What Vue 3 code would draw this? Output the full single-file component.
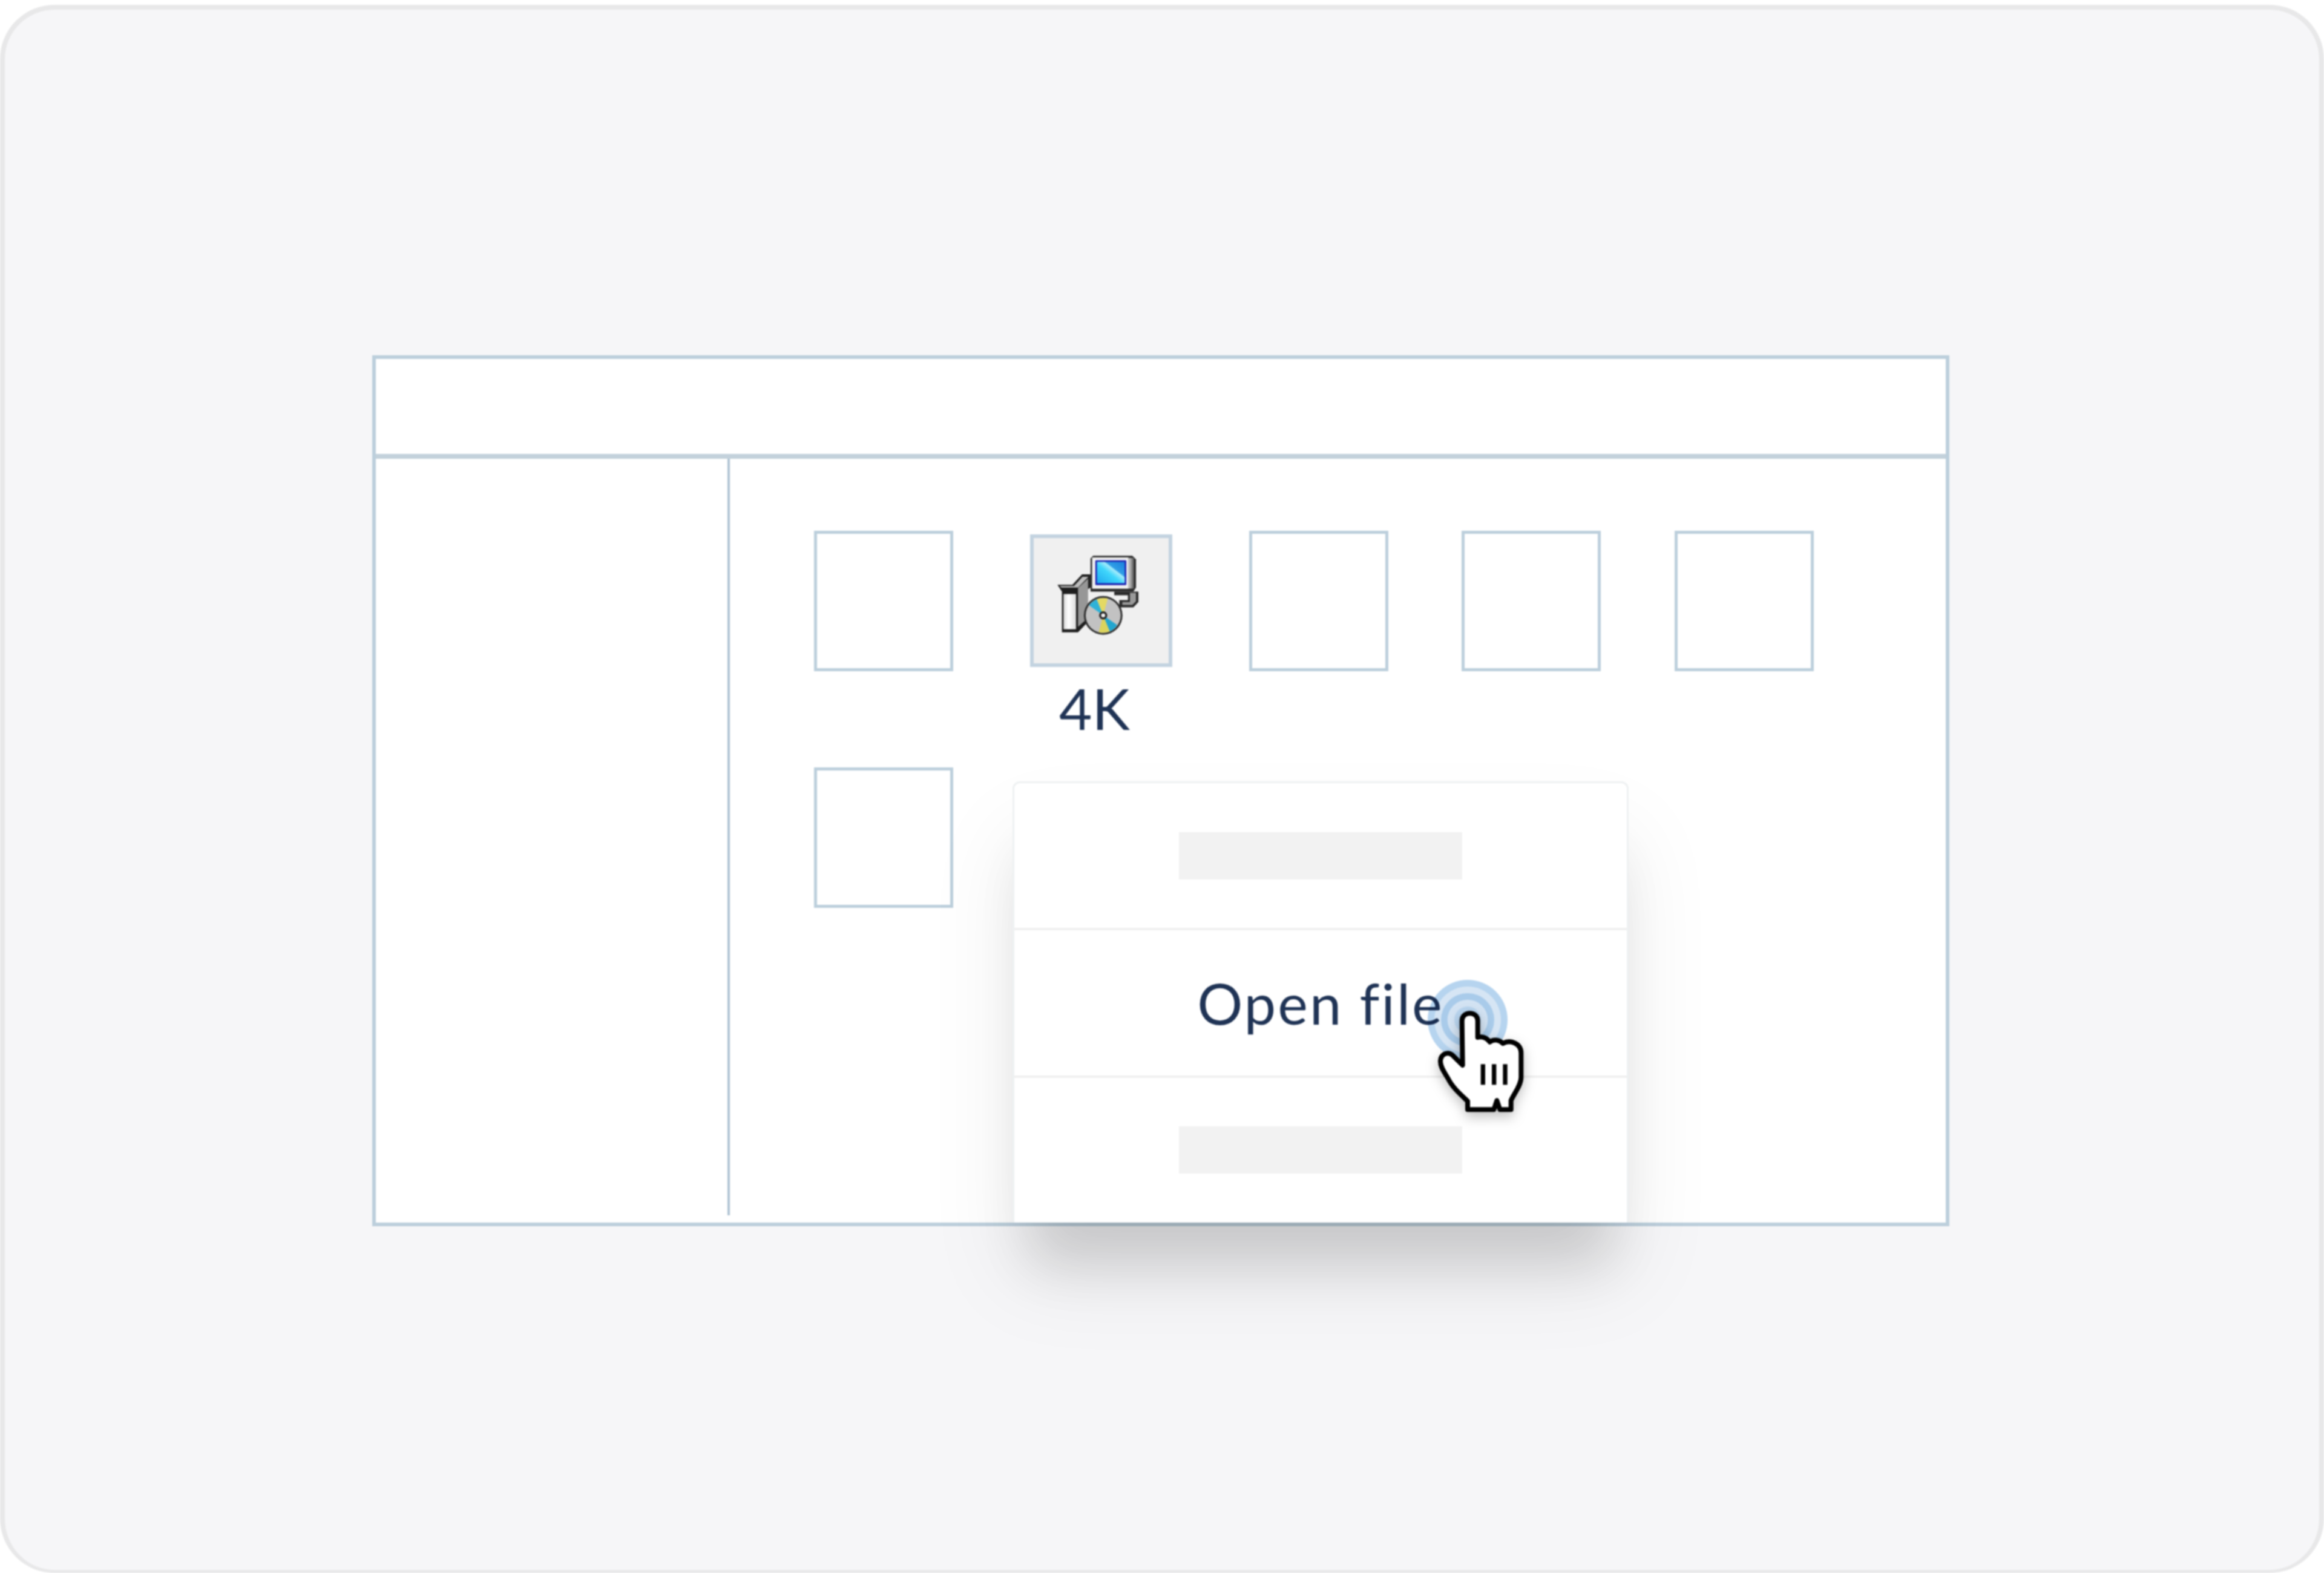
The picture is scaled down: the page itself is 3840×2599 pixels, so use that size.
<script setup>
const plainBoxes = [1, 2, 3]
</script>

<template>
  <main class="page">
    <section class="window">
      <header class="window-head"></header>
      <div class="window-body">
        <aside class="sidebar"></aside>
        <div class="files">
          <div class="box"></div>
          <div class="file-selected">
            <div class="box-selected">
              <svg class="installer" viewBox="180 150 440 430" width="147" height="143">
                <defs>
                  <linearGradient id="screen" x1="0" y1="1" x2="1" y2="0">
                    <stop offset="0" stop-color="#1fa8ee" />
                    <stop offset="0.45" stop-color="#3fd6fb" />
                    <stop offset="0.62" stop-color="#a6ecfb" />
                    <stop offset="0.66" stop-color="#2f9fe6" />
                    <stop offset="1" stop-color="#1b7fdc" />
                  </linearGradient>
                  <linearGradient id="boxfront" x1="0" y1="0" x2="1" y2="0">
                    <stop offset="0" stop-color="#d8d8d8" />
                    <stop offset="0.4" stop-color="#ffffff" />
                    <stop offset="1" stop-color="#dcdcdc" />
                  </linearGradient>
                  <linearGradient id="monside" x1="0" y1="0" x2="1" y2="0">
                    <stop offset="0" stop-color="#d8d8d8" />
                    <stop offset="1" stop-color="#555" />
                  </linearGradient>
                </defs>
                <path d="M480 350H600V402L575 428H505V392H548V368H480Z" fill="#2a2a2a" />
                <path d="M550 356H588V398L570 416H520V402H558V356Z" fill="#9a9a9a" />
                <path d="M375 172H570L588 190V330L575 350H362V185Z" fill="#2a2a2a" />
                <path d="M370 180H550V336H370Z" fill="#f2f2f2" />
                <path d="M550 182H578V335H550Z" fill="url(#monside)" />
                <rect x="386" y="194" width="154" height="124" fill="#1a1fb0" rx="4" />
                <rect x="394" y="202" width="138" height="106" fill="url(#screen)" />
                <path d="M198 316H272L320 264H362V330L340 345V510L300 552H220V350Z" fill="#1d1d1d" />
                <path d="M208 322H280L322 276H352L300 330H218Z" fill="#bdbdbd" />
                <path d="M300 332L350 285V480L300 525Z" fill="#979797" />
                <rect x="228" y="362" width="62" height="175" fill="url(#boxfront)" />
                <circle cx="425" cy="468" r="96" fill="#2b2b2b" />
                <circle cx="425" cy="468" r="87" fill="#c2c2c2" />
                <path d="M425 468L393 388A87 87 0 0 1 448 384Z" fill="#e4d964" />
                <path d="M425 468L355 418A87 87 0 0 1 393 388Z" fill="#2fb2d8" />
                <path d="M425 468L458 548A87 87 0 0 1 403 552Z" fill="#dcd45c" />
                <path d="M425 468L495 516A87 87 0 0 1 458 548Z" fill="#23a6cf" />
                <circle cx="425" cy="468" r="20" fill="#222" />
                <circle cx="425" cy="468" r="10" fill="#f4f4f4" />
              </svg>
            </div>
            <div class="file-label">4K</div>
          </div>
          <div v-for="n in plainBoxes" :key="n" class="box"></div>
          <div class="box"></div>
        </div>

        <div class="menu">
          <div class="menu-row"><span class="placeholder"></span></div>
          <div class="menu-row menu-row-mid">Open file</div>
          <div class="menu-row"><span class="placeholder"></span></div>
        </div>

        <svg class="ripple" viewBox="0 0 780 900" width="260" height="300">
          <circle cx="375" cy="345" r="198" fill="#b6d4ef" />
          <circle cx="375" cy="345" r="165" fill="#d6e5f4" />
          <circle cx="375" cy="345" r="132" fill="#a9cbea" />
          <circle cx="375" cy="345" r="100" fill="#d3e3f3" />
          <circle cx="375" cy="345" r="66" fill="#b9d5ef" />
        </svg>
        <svg class="cursor" viewBox="0 0 780 900" width="260" height="300">
          <path
            class="hand"
            d="M347 350C347 300 425 300 425 350V432C450 425 470 435 485 455C505 438 535 445 550 462C590 440 640 465 640 510V630C640 670 605 710 590 745V790H535L520 745L505 790H375V748C340 715 300 680 280 640C265 610 240 585 240 550C242 515 275 500 300 520L350 570Z"
          />
          <rect x="440" y="565" width="22" height="102" fill="#000" />
          <rect x="495" y="565" width="22" height="102" fill="#000" />
          <rect x="550" y="565" width="22" height="102" fill="#000" />
        </svg>
      </div>
    </section>
  </main>
</template>

<style>
html,
body {
  margin: 0;
  background: #fff;
}
</style>

<style scoped>
.page {
  box-sizing: border-box;
  width: 3840px;
  height: 2591px;
  margin-top: 8px;
  padding: 571px 0 0 607px;
  background: #f6f6f8;
  border: 8px solid #e8e8e9;
  border-bottom-width: 5px;
  border-radius: 90px;
  font-family: Lato, "Liberation Sans", sans-serif;
  filter: blur(1.2px);
  overflow: hidden;
}
.window {
  box-sizing: border-box;
  width: 2606px;
  height: 1439px;
  background: #fff;
  border: 6px solid #bccfdc;
  display: flex;
  flex-direction: column;
}
.window-head {
  height: 157px;
  border-bottom: 8px solid #c3d1db;
  flex: none;
}
.window-body {
  position: relative;
  flex: 1;
  display: flex;
}
.sidebar {
  box-sizing: content-box;
  width: 581px;
  margin-bottom: 12px;
  border-right: 4px solid #b0c4d3;
  flex: none;
}
.files {
  flex: 1;
  padding: 119px 0 0 139px;
  display: grid;
  grid-template-columns: 357px 362px 351px 352px 230px;
  grid-template-rows: 391px 230px;
  align-content: start;
}
.box {
  box-sizing: border-box;
  width: 230px;
  height: 232px;
  border: 5px solid #bccfdc;
}
.file-selected {
  padding-top: 6px;
}
.box-selected {
  box-sizing: border-box;
  width: 235px;
  height: 219px;
  background: #f0f0f0;
  border: 6px solid #c3d3e0;
  display: flex;
  align-items: flex-start;
  justify-content: center;
  padding: 22px 10px 0 0;
}
.file-label {
  width: 235px;
  padding-right: 22px;
  box-sizing: border-box;
  margin-top: 21px;
  text-align: center;
  font-size: 94px;
  line-height: 94px;
  color: #1f3355;
}
.menu {
  position: absolute;
  left: 1052px;
  top: 533px;
  width: 1018px;
  bottom: 0;
  box-sizing: border-box;
  background: #fff;
  border: 3px solid #eef1f2;
  border-bottom: 0;
  border-radius: 12px 12px 0 0;
  box-shadow:
    0 100px 80px -30px rgba(0, 0, 0, 0.12),
    0 90px 150px rgba(0, 0, 0, 0.08);
  display: flex;
  flex-direction: column;
}
.menu-row {
  flex: 1;
  display: flex;
  align-items: center;
  justify-content: center;
}
.menu-row-mid {
  border-top: 4px solid #f0f0f0;
  border-bottom: 4px solid #f0f0f0;
  font-size: 94px;
  letter-spacing: 3px;
  color: #1f3355;
}
.placeholder {
  display: block;
  width: 468px;
  height: 78px;
  background: #f2f2f2;
}
.ripple {
  position: absolute;
  left: 1679px;
  top: 812px;
  mix-blend-mode: multiply;
}
.cursor {
  position: absolute;
  left: 1679px;
  top: 812px;
  overflow: visible;
}
.hand {
  fill: #fff;
  stroke: #000;
  stroke-width: 24px;
  stroke-linejoin: round;
  filter: drop-shadow(0 24px 30px rgba(0, 0, 0, 0.25));
}
</style>
